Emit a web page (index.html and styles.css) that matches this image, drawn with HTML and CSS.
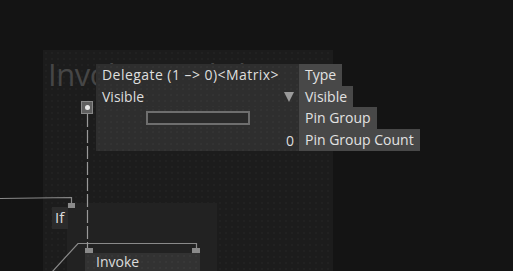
FILE: index.html
```html
<!DOCTYPE html>
<html>
<head>
<meta charset="utf-8">
<link rel="stylesheet" href="styles.css">
</head>
<body>
<div class="canvas">
  <div class="group">
    <div class="group-title">Invoke Lambda</div>
  </div>
  <div class="subgroup"></div>

  <svg class="wires" width="513" height="271" viewBox="0 0 513 271">
    <polyline points="0,198.5 71.5,197.5 71.5,204" fill="none" stroke="#8a8a8a" stroke-width="1.2"/>
    <polyline points="52,272 78,243.5 196.5,243.5 196.5,249" fill="none" stroke="#8a8a8a" stroke-width="1.2"/>
    <line x1="87.5" y1="114" x2="87.5" y2="250" stroke="#999" stroke-width="1.2" stroke-dasharray="13 3"/>
  </svg>

  <div class="pin-top"><span class="pin-dot"></span></div>

  <div class="node-if">If</div>
  <div class="pin pin-if"></div>

  <div class="node-invoke">Invoke</div>
  <div class="pin pin-inv-l"></div>
  <div class="pin pin-inv-r"></div>

  <div class="inspector">
    <div class="row r1">
      <div class="val val-type">Delegate (1 –&gt; 0)&lt;Matrix&gt;</div>
      <div class="lbl">Type</div>
    </div>
    <div class="row r2">
      <div class="val val-split"><span>Visible</span><span class="tri"></span></div>
      <div class="lbl">Visible</div>
    </div>
    <div class="row r3">
      <div class="val val-box"><span class="textbox"></span></div>
      <div class="lbl">Pin Group</div>
    </div>
    <div class="row r4">
      <div class="val val-right">0</div>
      <div class="lbl">Pin Group Count</div>
    </div>
  </div>
</div>
</body>
</html>
```

FILE: styles.css
```css
* { box-sizing: border-box; }
html, body {
  margin: 0;
  padding: 0;
  width: 513px;
  height: 271px;
  overflow: hidden;
  background: #141414;
  font-family: "Open Sans", "DejaVu Sans", sans-serif;
}
.canvas {
  position: relative;
  width: 513px;
  height: 271px;
  background: #141414;
  overflow: hidden;
}
.group {
  position: absolute;
  left: 43px;
  top: 50px;
  width: 290px;
  height: 240px;
  background-color: #1c1c1c;
  background-image: radial-gradient(circle, #242424 0.6px, transparent 0.9px);
  background-size: 6px 6px;
}
.group-title {
  position: absolute;
  left: 5px;
  top: 3px;
  font-size: 31px;
  color: #464646;
  white-space: nowrap;
  letter-spacing: -0.5px;
}
.subgroup {
  position: absolute;
  left: 67px;
  top: 203px;
  width: 150px;
  height: 80px;
  background: #222222;
}
.wires {
  position: absolute;
  left: 0;
  top: 0;
}
.pin-top {
  position: absolute;
  left: 81px;
  top: 101px;
  width: 12px;
  height: 13px;
  background: #5f5f5f;
  border: 1px solid #888;
  display: flex;
  align-items: center;
  justify-content: center;
}
.pin-dot {
  width: 5px;
  height: 5px;
  border-radius: 50%;
  background: #e8e8e8;
}
.pin {
  position: absolute;
  height: 5px;
  background: #8a8a8a;
}
.pin-if { left: 68px; top: 203px; width: 7px; }
.pin-inv-l { left: 85px; top: 248px; width: 8px; }
.pin-inv-r { left: 192px; top: 248px; width: 8px; }
.node-if {
  position: absolute;
  left: 52px;
  top: 207px;
  width: 16px;
  height: 22px;
  background: #2b2b2b;
  color: #dcdcdc;
  font-size: 15px;
  line-height: 21px;
  padding-left: 3px;
}
.node-invoke {
  position: absolute;
  left: 85px;
  top: 253px;
  width: 115px;
  height: 30px;
  background-color: #323232;
  background-image: radial-gradient(circle, #3a3a3a 0.6px, transparent 0.9px);
  background-size: 6px 6px;
  color: #dcdcdc;
  font-size: 14px;
  line-height: 18px;
  padding-left: 11px;
}
.inspector {
  position: absolute;
  left: 96px;
  top: 64px;
  display: flex;
  flex-direction: column;
}
.row {
  display: flex;
  align-items: stretch;
}
.r1, .r3, .r4 { height: 22px; }
.r2 { height: 21px; }
.val {
  width: 203px;
  background-color: #2e2e2e;
  background-image: radial-gradient(circle, #363636 0.6px, transparent 0.9px);
  background-size: 6px 6px;
  color: #dedede;
  font-size: 14px;
  line-height: 21px;
  padding-left: 6px;
  white-space: nowrap;
}
.val-type {
  letter-spacing: 0.45px;
}
.val-split {
  display: flex;
  justify-content: space-between;
  align-items: center;
  padding-right: 5px;
}
.tri {
  width: 0;
  height: 0;
  border-left: 5px solid transparent;
  border-right: 5px solid transparent;
  border-top: 10px solid #9a9a9a;
}
.val-box {
  display: flex;
  align-items: flex-start;
  padding-left: 50px;
  padding-top: 4px;
}
.textbox {
  width: 104px;
  height: 14px;
  border: 2px solid #6e6e6e;
  background: #2a2a2a;
}
.val-right {
  text-align: right;
  padding-right: 5px;
  line-height: 24px;
}
.lbl {
  background: #484848;
  color: #e2e2e2;
  font-size: 14px;
  line-height: 21px;
  padding: 0 6px 0 6px;
  white-space: nowrap;
}
```
